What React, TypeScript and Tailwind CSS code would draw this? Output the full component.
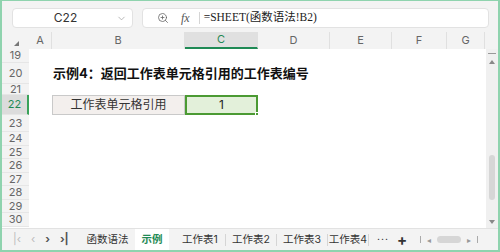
import { ChevronDown, ZoomIn } from 'lucide-react'

const cols = [
    { key: 'A', w: 'w-[23px]' },
    { key: 'B', w: 'w-[133px]' },
    { key: 'C', w: 'w-[73px]' },
    { key: 'D', w: 'w-[72px]' },
    { key: 'E', w: 'w-[62px]' },
    { key: 'F', w: 'w-[55px]' },
    { key: 'G', w: 'w-[38px]' },
]

const rows = [
    { n: 19, h: 'h-[14px]' },
    { n: 20, h: 'h-[21px]' },
    { n: 21, h: 'h-[11px]' },
    { n: 22, h: 'h-[20px]' },
    { n: 23, h: 'h-[17px]' },
    { n: 24, h: 'h-[14px]' },
    { n: 25, h: 'h-[13px]' },
    { n: 26, h: 'h-[14px]' },
    { n: 27, h: 'h-[13px]' },
    { n: 28, h: 'h-[14px]' },
    { n: 29, h: 'h-[13px]' },
    { n: 30, h: 'h-[14px]' },
]

const sheets = [
    { name: '工作表1', w: 'w-[50px]' },
    { name: '工作表2', w: 'w-[50px]' },
    { name: '工作表3', w: 'w-[50px]' },
    { name: '工作表4', w: 'w-[40px]' },
]

const font = "font-['Inter','Noto_Sans_CJK_SC',sans-serif]"

function RowContent({ n }: { n: number }) {
    if (n === 20) {
        return (
            <div className="flex items-center h-full pl-[24px] text-[13px] font-bold text-[#111] whitespace-nowrap">
                示例4：返回工作表单元格引用的工作表编号
            </div>
        )
    }
    if (n === 22) {
        return (
            <div className="flex h-full">
                <div className="w-[23px]" />
                <div className="w-[133px] h-full bg-[#f3efed] border border-[#c9c9c9] flex items-center justify-center text-[12px] text-[#333]">
                    工作表单元格引用
                </div>
                <div className="relative w-[73px] h-full bg-[#e3f0da] border-2 border-[#4b9a33] flex items-center justify-center text-[12px] text-[#222]">
                    1
                    <div className="absolute -right-[3px] -bottom-[3px] w-[4px] h-[4px] bg-[#4b9a33] border border-white" />
                </div>
            </div>
        )
    }
    return null
}

export default function App() {
    return (
        <div className={`w-[500px] h-[252px] bg-[#f3f3f3] border-2 border-t border-[#8fd3ae] flex flex-col overflow-hidden ${font}`}>
            {/* toolbar */}
            <div className="h-[31px] flex items-start pt-[7px] pl-[10px] pr-[9px] gap-[9px]">
                <div className="relative w-[121px] h-[20px] bg-white rounded-[4px] border border-[#e2e2e2] flex items-center justify-center pr-[14px] text-[12px] text-[#333]">
                    C22
                    <ChevronDown className="absolute right-[5px] w-[11px] h-[11px] text-[#999]" strokeWidth={1.5} />
                </div>
                <div className="flex-1 h-[20px] bg-white rounded-[4px] border border-[#e2e2e2] flex items-center">
                    <ZoomIn className="ml-[14px] w-[12px] h-[12px] text-[#666]" strokeWidth={1.6} />
                    <span className="ml-[12px] text-[12px] italic text-[#555] font-['Liberation_Serif',serif]">fx</span>
                    <div className="ml-[9px] w-px h-[12px] bg-[#d5d5d5]" />
                    <span className="ml-[4px] text-[11.5px] text-[#222] font-['Liberation_Serif','Noto_Sans_CJK_SC',serif] whitespace-nowrap">
                        =SHEET(函数语法!B2)
                    </span>
                </div>
            </div>

            {/* column headers */}
            <div className="h-[17px] flex text-[11px] text-[#666]">
                <div className="w-[27px] relative">
                    <div className="absolute left-[12px] bottom-[3px] w-0 h-0 border-l-[5px] border-l-transparent border-b-[5px] border-b-[#777]" />
                </div>
                {cols.map((c) => (
                    <div
                        key={c.key}
                        className={`${c.w} flex items-center justify-center border-r border-[#e0e0e0] ${c.key === 'C' ? 'bg-[#e0e0e0] text-[#1f8a55] border-b-2 border-b-[#1f8a55]' : ''}`}
                    >
                        {c.key}
                    </div>
                ))}
            </div>

            {/* body */}
            <div className="flex flex-1 min-h-0">
                <div className="flex-1 flex flex-col bg-white">
                    {rows.map((r) => (
                        <div key={r.n} className={`${r.h} flex`}>
                            <div
                                className={`w-[27px] shrink-0 flex items-center justify-center text-[11px] border-b border-[#e6e6e6] ${r.n === 22 ? 'bg-[#dcdcdc] text-[#1f8a55] border-r-2 border-r-[#3aa35a]' : 'bg-[#f3f3f3] text-[#666]'}`}
                            >
                                {r.n}
                            </div>
                            <div className="flex-1">
                                <RowContent n={r.n} />
                            </div>
                        </div>
                    ))}
                </div>
                {/* vertical scrollbar */}
                <div className="w-[12px] bg-[#f0f0f0] flex flex-col items-center pt-[4px] pb-[4px]">
                    <div className="w-[8px] h-px bg-[#999]" />
                    <div className="mt-[6px] w-0 h-0 border-l-[3px] border-l-transparent border-r-[3px] border-r-transparent border-b-[4px] border-b-[#888]" />
                    <div className="mt-[91px] w-[6px] h-[45px] rounded-full bg-[#d6d6d6]" />
                    <div className="mt-auto w-0 h-0 border-l-[3px] border-l-transparent border-r-[3px] border-r-transparent border-t-[4px] border-t-[#888]" />
                </div>
            </div>

            {/* sheet tabs */}
            <div className="h-[22px] flex items-stretch border-t border-[#e2e2e2] text-[10.5px] text-[#333]">
                <div className="flex items-center gap-[10px] pl-[11px] w-[78px] text-[11px] text-[#555]">
                    <span className="text-[#bbb]">|‹</span>
                    <span className="text-[#bbb]">‹</span>
                    <span className="font-bold">›</span>
                    <span className="font-bold">›|</span>
                </div>
                <div className="w-[55px] flex items-center justify-center">函数语法</div>
                <div className="w-[34px] bg-white flex items-center justify-center text-[#1f8a55] font-bold">示例</div>
                <div className="w-[6px]" />
                {sheets.map((s, i) => (
                    <div key={s.name} className="flex items-center">
                        {i > 0 && <div className="w-px h-[12px] bg-[#d5d5d5]" />}
                        <div className={`${s.w} flex items-center justify-center whitespace-nowrap`}>{s.name}</div>
                    </div>
                ))}
                <div className="w-px h-[12px] self-center bg-[#d5d5d5]" />
                <div className="flex items-center ml-[8px] gap-[8px]">
                    <span className="tracking-[1px]">···</span>
                    <span className="text-[15px] font-bold leading-none">+</span>
                </div>
                <div className="flex items-center ml-[13px] gap-[6px] text-[#999] text-[8px]">
                    <span className="w-px h-[7px] bg-[#aaa]" />
                    <span>◂</span>
                    <span className="w-[24px] h-[7px] rounded-full bg-[#d6d6d6]" />
                    <span>▸</span>
                    <span className="w-px h-[7px] bg-[#aaa]" />
                </div>
            </div>
        </div>
    )
}
